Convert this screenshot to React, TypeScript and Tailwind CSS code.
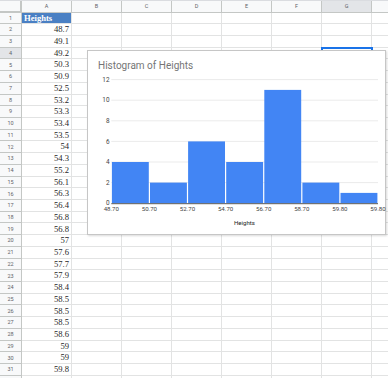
const cols = ["A", "B", "C", "D", "E", "F", "G", "H"];

const heights = [
  "48.7", "49.1", "49.2", "50.3", "50.9", "52.5", "53.2", "53.3", "53.4", "53.5",
  "54", "54.3", "55.2", "56.1", "56.3", "56.4", "56.8", "56.8", "57", "57.6",
  "57.7", "57.9", "58.4", "58.5", "58.5", "58.5", "58.6", "59", "59", "59.8",
];

const bins = [4, 2, 6, 4, 11, 2, 1];
const edges = ["48.70", "50.70", "52.70", "54.70", "56.70", "58.70", "59.80", "59.80"];

// plot geometry inside the chart box
const x0 = 23.3;
const binW = 38.1;
const base = 152.2;
const unit = 10.3;

const Histogram = () => (
  <div className="absolute left-[87px] top-[50px] w-[299px] h-[185px] bg-white border border-[#c6c6c6] shadow-[1px_1px_2px_rgba(0,0,0,0.15)]">
    <svg width="299" height="185" className="block" style={{ fontFamily: "Roboto, 'Liberation Sans', sans-serif" }}>
      <text x="10" y="17.6" fontSize="10" fill="#757575">
        Histogram of Heights
      </text>
      {[0, 2, 4, 6, 8, 10, 12].map((v) => (
        <g key={v}>
          {v > 0 && (
            <line x1={x0} x2={290} y1={base - v * unit} y2={base - v * unit} stroke="#ebebeb" strokeWidth="1" />
          )}
          <text x="21.5" y={base - v * unit + 2.2} fontSize="6.4" fill="#444" textAnchor="end">
            {v}
          </text>
        </g>
      ))}
      {bins.map((c, i) => (
        <rect
          key={i}
          x={x0 + i * binW + 0.6}
          y={base - c * unit}
          width={binW - 1.2}
          height={c * unit}
          fill="#4285f4"
        />
      ))}
      <line x1={x0} x2={290} y1={base + 0.5} y2={base + 0.5} stroke="#555" strokeWidth="1" />
      {edges.map((e, i) => (
        <text key={i} x={x0 + i * binW} y={base + 7.9} fontSize="6.1" fill="#444" textAnchor="middle">
          {e}
        </text>
      ))}
      <text x="156.5" y="174.4" fontSize="6.1" fill="#222" textAnchor="middle">
        Heights
      </text>
    </svg>
  </div>
);

export default function App() {
  const rows = Array.from({ length: 32 }, (_, i) => i + 1);
  return (
    <div className="relative w-[388px] h-[378px] overflow-hidden bg-white">
      <div className="grid grid-cols-[22px_50px_50px_50px_50px_50px_50px_50px_50px] w-[422px] border-t border-[#dadce0]">
        <div className="h-[11.5px] bg-[#f8f9fa] border-r-2 border-b-2 border-[#c4c7c5]" />
        {cols.map((c) => (
          <div
            key={c}
            className={`h-[11.5px] flex items-center justify-center border-r border-b border-[#c4c7c5] text-[5.5px] text-[#5f6368] ${
              c === "G" ? "bg-[#e3e5e8]" : "bg-[#f8f9fa]"
            }`}
            style={{ fontFamily: "Roboto, 'Liberation Sans', sans-serif" }}
          >
            {c === "H" ? "" : c}
          </div>
        ))}
        {rows.map((r) => (
          <div key={r} className="contents">
            <div
              className={`h-[11.72px] flex items-center justify-center border-r border-b border-[#c4c7c5] text-[5.5px] text-[#5f6368] ${
                r === 4 ? "bg-[#e3e5e8]" : "bg-[#f8f9fa]"
              }`}
              style={{ fontFamily: "Roboto, 'Liberation Sans', sans-serif" }}
            >
              {r < 32 ? r : ""}
            </div>
            {cols.map((c) => {
              const isHead = c === "A" && r === 1;
              const val = c === "A" && r > 1 && r < 32 ? heights[r - 2] : "";
              return (
                <div
                  key={c}
                  className={`h-[11.72px] flex items-center border-r border-b border-[#e2e3e3] text-[8.6px] leading-none ${
                    isHead
                      ? "bg-[#4a80c4] text-white font-bold justify-start pl-[2px]"
                      : "justify-end pr-[2px] text-[#1f1f1f]"
                  }`}
                  style={{ fontFamily: "'Liberation Serif', serif" }}
                >
                  {isHead ? "Heights" : val}
                </div>
              );
            })}
          </div>
        ))}
      </div>
      <div className="absolute left-[321px] top-[46.5px] w-[51.5px] h-[12.5px] border-2 border-[#1a73e8]" />
      <Histogram />
    </div>
  );
}
